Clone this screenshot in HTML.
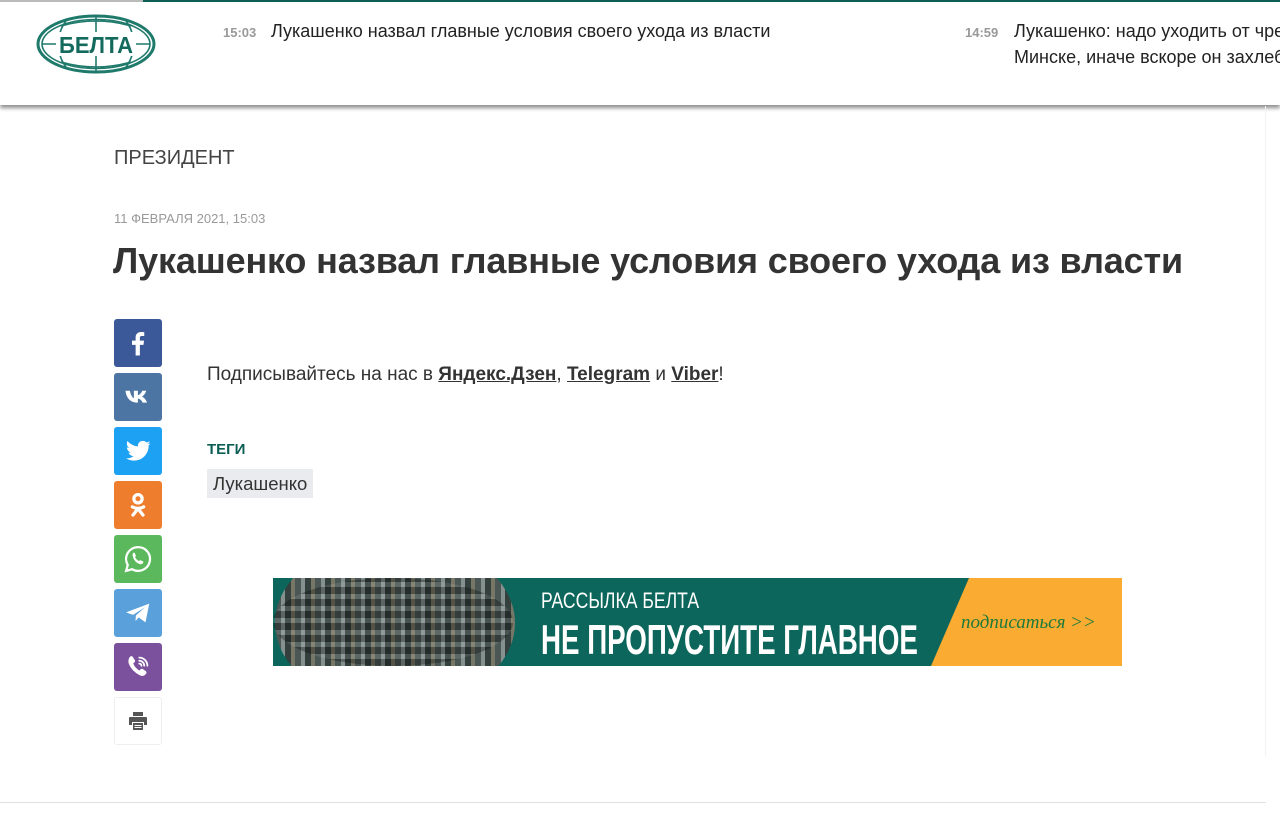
<!DOCTYPE html>
<html><head><meta charset="utf-8"><style>
*{margin:0;padding:0;box-sizing:border-box}
html,body{overflow:hidden}
body{width:1280px;height:813px;background:#fff;font-family:"Liberation Sans","DejaVu Sans",sans-serif;color:#333;position:relative}
.hdr{position:absolute;left:0;top:0;width:1280px;height:105px;background:#fff;box-shadow:0 3px 4px rgba(0,0,0,.45);border-top:2px solid #0d5e55}
.hdr:before{content:"";position:absolute;left:0;top:-2px;width:143px;height:2px;background:#bbb}
.news{position:absolute;font-size:18px;line-height:26px;color:#222}
.news b{position:absolute;font-size:13px;color:#999;font-weight:bold}
.soc{position:absolute;left:114px;width:48px;height:48px;border-radius:3px;display:flex;align-items:center;justify-content:center}
.soc svg{width:30px;height:30px}
</style></head><body>
<div class="hdr">
<svg style="position:absolute;left:36px;top:12px" width="120" height="60" viewBox="0 0 120 60">
<g fill="none" stroke="#1f7a6c" stroke-width="1.6">
<ellipse cx="60" cy="30" rx="58" ry="28" stroke-width="3"/>
<ellipse cx="60" cy="30" rx="54" ry="24.5"/>
<path d="M6 30H114M60 3V57M30 7C20 20 20 40 30 53M90 7C100 20 100 40 90 53M25 12Q60 2 95 12M25 48Q60 58 95 48"/>
</g>
<rect x="20" y="18" width="80" height="24" fill="#fff"/>
<text x="60" y="39" text-anchor="middle" font-family="Liberation Sans" font-weight="bold" font-size="23" fill="#146a5d" textLength="74" lengthAdjust="spacingAndGlyphs">БЕЛТА</text>
</svg>
<div class="news" style="left:271px;top:16px"><b style="left:-48px;top:2px">15:03</b>Лукашенко назвал главные условия своего ухода из власти</div>
<div class="news" style="left:965px;top:16px;width:315px;height:60px;overflow:hidden;white-space:nowrap;padding-left:49px"><b style="left:0;top:2px">14:59</b>Лукашенко: надо уходить от чрезмерной<br>Минске, иначе вскоре он захлебнется</div>
</div>
<div style="position:absolute;left:1265px;top:106px;width:1px;height:650px;background:#f2f2f2"></div>
<div style="position:absolute;left:0;top:802px;width:1266px;height:1px;background:#e0e0e0"></div>
<div style="position:absolute;left:114px;top:147px;font-size:20px;color:#444">ПРЕЗИДЕНТ</div>
<div style="position:absolute;left:114px;top:211px;font-size:13px;color:#999">11 ФЕВРАЛЯ 2021, 15:03</div>
<div style="position:absolute;left:113px;top:240px;font-size:36px;font-weight:bold;color:#333;white-space:nowrap;letter-spacing:-0.15px">Лукашенко назвал главные условия своего ухода из власти</div>

<div class="soc" style="top:319px;background:#3b5998"><svg viewBox="0 0 24 24"><path fill="#fff" d="M13.5 22v-8.5h2.9l.4-3.4h-3.3V8c0-1 .3-1.6 1.7-1.6H17V3.3c-.3 0-1.4-.1-2.6-.1-2.6 0-4.3 1.6-4.3 4.4v2.5H7.2v3.4h2.9V22z"/></svg></div>
<div class="soc" style="top:373px;background:#4c75a3"><svg viewBox="0 0 24 24"><path fill="#fff" d="M2 7h3.5c.5 3 2 5.5 3.2 6V7h3.2v3.5c1.5-.2 3-2 3.5-3.5h3.2c-.5 2-2.2 4-3.4 4.7 1.4.6 3.3 2.4 4 4.8h-3.5c-.7-1.7-2-3-3.8-3.2v3.2h-.5C5.5 16.5 2.4 12 2 7z"/></svg></div>
<div class="soc" style="top:427px;background:#1da1f2"><svg viewBox="0 0 24 24"><path fill="#fff" d="M22 5.9c-.7.3-1.5.5-2.4.6.9-.5 1.5-1.3 1.8-2.3-.8.5-1.7.8-2.6 1-1.6-1.7-4.3-1.7-5.9 0-.8.8-1.1 2-.9 3.100C8.700 8.100 5.700 6.500 3.600 4c-1 1.900-.500 4.300 1.300 5.500-.6 0-1.300-.2-1.800-.5 0 2 1.400 3.700 3.300 4.100-.6.200-1.300.200-1.900.100.500 1.700 2.100 2.900 3.900 2.900-1.700 1.300-3.800 2-5.900 1.800C4.400 19.100 6.600 19.700 8.800 19.700c7.500 0 11.700-6.300 11.700-11.700v-.5c.6-.5 1.100-1 1.500-1.600z"/></svg></div>
<div class="soc" style="top:481px;background:#ee7d2d"><svg viewBox="0 0 24 24"><g fill="none" stroke="#fff" stroke-width="2.6" stroke-linecap="round"><circle cx="12" cy="7" r="3.3"/><path d="M7.5 13.5q4.5 2.5 9 0M12 15l-4 5M12 15l4 5"/></g></svg></div>
<div class="soc" style="top:535px;background:#5cb85c"><svg viewBox="0 0 24 24"><path fill="none" stroke="#fff" stroke-width="1.8" d="M12 2.5a9.5 9.5 0 0 0-8.2 14.3L2.5 21.5l4.800-1.300A9.500 9.500 0 1 0 12 2.500z"/><path fill="#fff" d="M8.500 7c.4-.2.800 0 1 .4l.8 1.900c.1.400-.3.800-.600 1.200.600 1.400 1.700 2.500 3.100 3.100.4-.3.800-.8 1.200-.6l1.900.8c.4.2.5.6.3 1-.5 1.200-1.500 1.600-2.700 1.300-2.600-.8-4.600-2.800-5.400-5.400C7.300 8.500 7.700 7.500 8.500 7z"/></svg></div>
<div class="soc" style="top:589px;background:#5aa1db"><svg viewBox="0 0 24 24"><path fill="#fff" d="M2.500 11.500 21 4.500l-3 15-5.500-4-2.500 3 .3-4.500L17.500 7.500 8 13.500z"/></svg></div>
<div class="soc" style="top:643px;background:#7b519d"><svg viewBox="0 0 24 24"><path fill="#fff" d="M6 3.500c.6-.4 1.300-.300 1.700.300l1.800 2.700c.3.600.2 1.300-.3 1.700l-1 .8c.6 2.200 2.900 4.900 5 5.800l.9-1c.4-.5 1.100-.6 1.700-.2l2.500 1.800c.6.400.7 1.200.3 1.800-1.200 1.700-2.700 2.400-4.500 1.700C9.800 17 6.300 13.500 4.600 9.200 4 7.200 4.500 4.600 6 3.500z"/><g fill="none" stroke="#fff" stroke-width="1.4" stroke-linecap="round"><path d="M13 4.500a6.500 6.500 0 0 1 6.500 6.500M13 7a4 4 0 0 1 4 4M13 9.300a1.800 1.800 0 0 1 1.800 1.800"/></g></svg></div>
<div class="soc" style="top:697px;background:#fff;border:1px solid #eee"><svg viewBox="0 0 24 24" style="width:24px;height:24px"><path fill="#555" d="M7 3h10v4H7zM4 8h16a1 1 0 0 1 1 1v7h-3v-3H6v3H3V9a1 1 0 0 1 1-1zM7 14h10v7H7z"/><path fill="#fff" d="M8.500 16h7v1h-7zM8.500 18h7v1h-7z"/></svg></div>

<div style="position:absolute;left:207px;top:364px;font-size:19px;color:#333;white-space:nowrap">Подписывайтесь на нас в <b style="text-decoration:underline">Яндекс.Дзен</b>, <b style="text-decoration:underline">Telegram</b> и <b style="text-decoration:underline">Viber</b>!</div>
<div style="position:absolute;left:207px;top:441px;font-size:15px;font-weight:bold;color:#0d5e55">ТЕГИ</div>
<div style="position:absolute;left:207px;top:469px;height:29px;padding:0 6px;background:#e9ebee;font-size:18.5px;line-height:29px;color:#333">Лукашенко</div>

<div style="position:absolute;left:273px;top:578px;width:849px;height:88px;background:#0d665b;overflow:hidden">
<div style="position:absolute;left:2px;top:-40px;width:240px;height:170px;border-radius:50%;background:repeating-linear-gradient(90deg,#555 0 6px,#999 6px 10px,#3a3a3a 10px 16px,#8a7a6a 16px 20px),#666;opacity:.85"></div>
<div style="position:absolute;left:0;top:0;width:240px;height:88px;background:repeating-linear-gradient(0deg,rgba(0,0,0,.3) 0 7px,rgba(255,255,255,.1) 7px 12px);border-radius:50%/50%"></div>
<div style="position:absolute;left:658px;top:0;width:191px;height:88px;background:#f9ab32;clip-path:polygon(38px 0,191px 0,191px 88px,0 88px)"></div>
<div style="position:absolute;left:268px;top:10px;color:#fff;font-size:22px;font-family:'Liberation Sans Narrow','Liberation Sans',sans-serif;transform:scaleX(.8);transform-origin:left">РАССЫЛКА БЕЛТА</div>
<div style="position:absolute;left:268px;top:38px;color:#fff;font-size:42px;font-weight:bold;font-family:'Liberation Sans Narrow','Liberation Sans',sans-serif;transform:scaleX(.66);transform-origin:left;white-space:nowrap">НЕ ПРОПУСТИТЕ ГЛАВНОЕ</div>
<div style="position:absolute;left:688px;top:34px;color:#1e7a3a;font-size:19px;font-style:italic;font-family:'Liberation Serif',serif">подписаться &gt;&gt;</div>
</div>
</body></html>
